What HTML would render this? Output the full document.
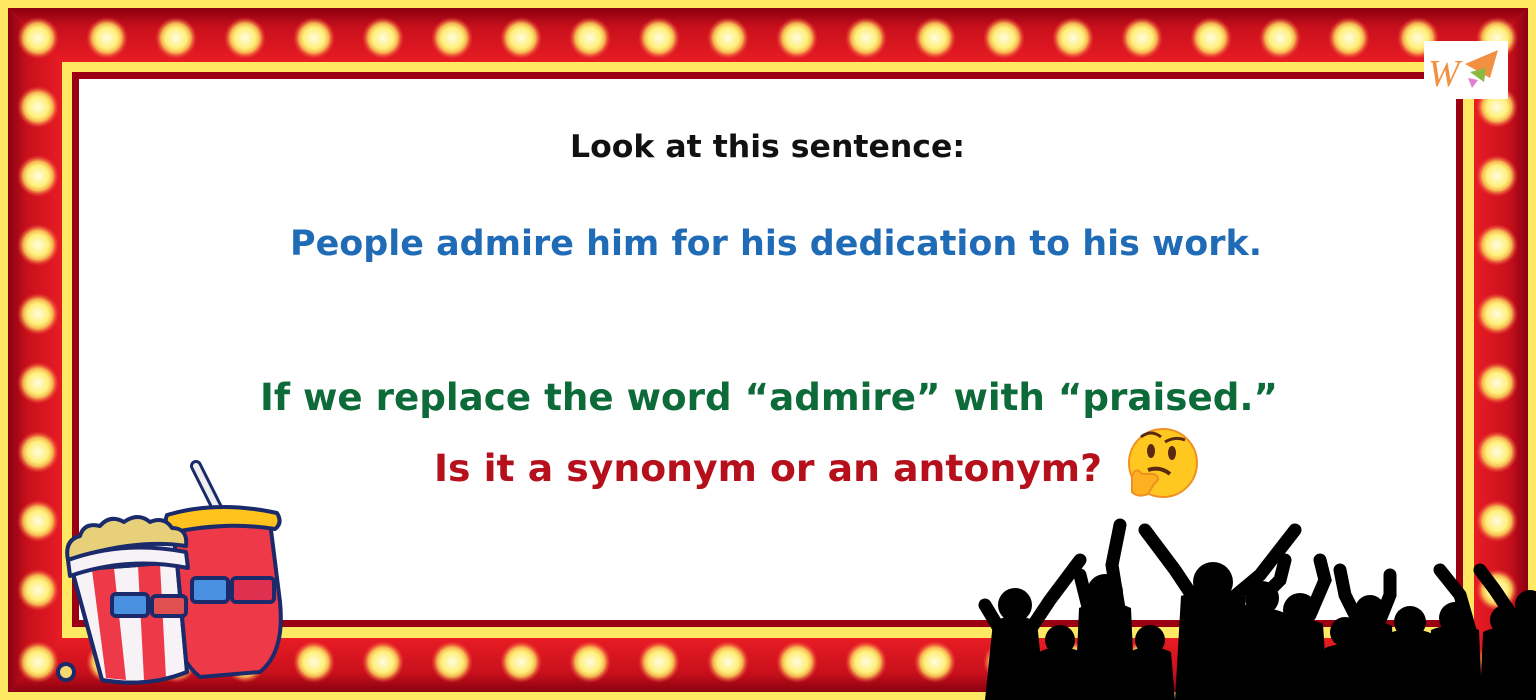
<!DOCTYPE html>
<html><head><meta charset="utf-8"><style>
html,body{margin:0;padding:0;width:1536px;height:700px;overflow:hidden;background:#fff}
</style></head><body>
<svg width="1536" height="700" viewBox="0 0 1536 700" xmlns="http://www.w3.org/2000/svg">
<defs>
<radialGradient id="bulb"><stop offset="0" stop-color="#fffbe0"/><stop offset="0.5" stop-color="#fff07a"/><stop offset="0.7" stop-color="#ffe060" stop-opacity="0.8"/><stop offset="1" stop-color="#ff5040" stop-opacity="0"/></radialGradient>
<linearGradient id="tg" x1="0" y1="0" x2="0" y2="1"><stop offset="0" stop-color="#8a0010"/><stop offset="0.35" stop-color="#c8101c"/><stop offset="1" stop-color="#e81c24"/></linearGradient>
<linearGradient id="bg" x1="0" y1="0" x2="0" y2="1"><stop offset="0" stop-color="#e81c24"/><stop offset="0.65" stop-color="#c8101c"/><stop offset="1" stop-color="#8a0010"/></linearGradient>
<linearGradient id="lg" x1="0" y1="0" x2="1" y2="0"><stop offset="0" stop-color="#8a0010"/><stop offset="0.35" stop-color="#c8101c"/><stop offset="1" stop-color="#e81c24"/></linearGradient>
<linearGradient id="rg" x1="0" y1="0" x2="1" y2="0"><stop offset="0" stop-color="#e81c24"/><stop offset="0.65" stop-color="#c8101c"/><stop offset="1" stop-color="#8a0010"/></linearGradient>
</defs>
<rect width="1536" height="700" fill="#ffe862"/>
<rect x="8" y="8" width="1520" height="684" fill="#e01a22"/>
<polygon points="8,8 1528,8 1474,62 62,62" fill="url(#tg)"/>
<polygon points="8,692 1528,692 1474,638 62,638" fill="url(#bg)"/>
<polygon points="8,8 62,62 62,638 8,692" fill="url(#lg)"/>
<polygon points="1528,8 1474,62 1474,638 1528,692" fill="url(#rg)"/>
<rect x="62" y="62" width="1412" height="576" fill="#ffe862"/>
<rect x="72" y="72" width="1391" height="555" fill="#9a0012"/>
<rect x="79" y="79" width="1377" height="541" fill="#fff"/>
<g fill="url(#bulb)">
<g id="row">
<circle cx="38" cy="38" r="21"/><circle cx="107" cy="38" r="21"/><circle cx="176" cy="38" r="21"/><circle cx="245" cy="38" r="21"/><circle cx="314" cy="38" r="21"/><circle cx="383" cy="38" r="21"/><circle cx="452" cy="38" r="21"/><circle cx="521" cy="38" r="21"/><circle cx="590" cy="38" r="21"/><circle cx="659" cy="38" r="21"/><circle cx="728" cy="38" r="21"/><circle cx="797" cy="38" r="21"/><circle cx="866" cy="38" r="21"/><circle cx="935" cy="38" r="21"/><circle cx="1004" cy="38" r="21"/><circle cx="1073" cy="38" r="21"/><circle cx="1142" cy="38" r="21"/><circle cx="1211" cy="38" r="21"/><circle cx="1280" cy="38" r="21"/><circle cx="1349" cy="38" r="21"/><circle cx="1418" cy="38" r="21"/><circle cx="1497" cy="38" r="21"/>
</g>
<use href="#row" y="624"/>
<g id="col">
<circle cx="38" cy="107" r="21"/><circle cx="38" cy="176" r="21"/><circle cx="38" cy="245" r="21"/><circle cx="38" cy="314" r="21"/><circle cx="38" cy="383" r="21"/><circle cx="38" cy="452" r="21"/><circle cx="38" cy="521" r="21"/><circle cx="38" cy="590" r="21"/>
</g>
<use href="#col" x="1459"/>
</g>
<!-- logo -->
<rect x="1424" y="41" width="84" height="58" fill="#fff"/>
<text x="1428" y="86" font-family="Liberation Serif,serif" font-style="italic" font-size="38" fill="#f09040">W</text>
<polygon points="1465,64 1498,50 1490,78" fill="#f09040"/>
<polygon points="1470,72 1486,68 1484,82" fill="#8ab840"/>
<polygon points="1468,78 1478,80 1472,88" fill="#e080d0"/>
<!-- text -->
<g font-family="'Comic Sans MS','DejaVu Sans',sans-serif" font-weight="bold">
<text x="570" y="157" font-size="31" fill="#111" textLength="395" lengthAdjust="spacingAndGlyphs">Look at this sentence:</text>
<text x="290" y="255" font-size="35" fill="#1f6bb5" textLength="972" lengthAdjust="spacingAndGlyphs">People admire him for his dedication to his work.</text>
<text x="260" y="410" font-size="37" fill="#0d6b3a" textLength="1018" lengthAdjust="spacingAndGlyphs">If we replace the word “admire” with “praised.”</text>
<text x="434" y="481" font-size="37" fill="#b5101c" textLength="668" lengthAdjust="spacingAndGlyphs">Is it a synonym or an antonym?</text>
</g>
<!-- emoji -->
<circle cx="1163" cy="463" r="34" fill="#ffc820" stroke="#f09020" stroke-width="2"/>
<ellipse cx="1151" cy="451" rx="4" ry="7" fill="#5a2a10"/><ellipse cx="1172" cy="453" rx="4" ry="7" fill="#5a2a10"/>
<path d="M1141 437 q10 -8 20 0 M1165 442 q10 -6 20 -2" stroke="#5a2a10" stroke-width="3" fill="none"/>
<path d="M1148 470 q12 -4 22 4" stroke="#5a2a10" stroke-width="4" fill="none"/>
<path d="M1132 476 q4 -10 10 -2 l12 0 q8 4 0 10 l-6 10 q-10 4 -16 -2z" fill="#ffb020" stroke="#f09020" stroke-width="2"/>
<!-- popcorn + cup -->
<g stroke="#1a2a6a" stroke-width="4" stroke-linejoin="round">
<path d="M196 466 l26 52" stroke="#1a2a6a" stroke-width="12" stroke-linecap="round"/>
<path d="M196 466 l26 52" stroke="#eee" stroke-width="6" stroke-linecap="round"/>
<path d="M175 530 l95 -8 l10 80 q5 50 -20 70 l-60 5 q-25 -20 -25 -60z" fill="#ee3a48"/>
<path d="M167 515 q50 -15 110 -2 q6 10 -2 16 q-50 -8 -104 4 q-8 -8 -4 -18z" fill="#ffc21e"/>
<path d="M68 560 q-4 -20 12 -24 q4 -14 20 -10 q10 -12 24 -4 q14 -10 26 0 q14 -6 22 6 q16 0 14 18 q-50 -8 -118 14z" fill="#e8d07a"/>
<path d="M72 570 l105 -8 l10 110 q-40 16 -85 8z" fill="#f6f2f6"/>
<path d="M92 570 l14 108 l20 2 l-12 -112z M138 566 l6 114 l22 -2 l-6 -114z" fill="#ee3a48" stroke="none"/>
<path d="M72 570 l105 -8 l10 110 q-40 16 -85 8z" fill="none"/>
<path d="M68 560 q55 -20 118 -8 l2 16 q-60 -12 -118 8z" fill="#f6f2f6"/>
<rect x="112" y="594" width="36" height="22" rx="4" fill="#4a90e0"/><rect x="152" y="596" width="34" height="20" rx="4" fill="#e05050"/>
<rect x="192" y="578" width="36" height="24" rx="4" fill="#4a90e0"/><rect x="232" y="578" width="42" height="24" rx="4" fill="#e03050"/>
<circle cx="66" cy="672" r="8" fill="#f5d870"/>
</g>
<!-- crowd silhouette -->
<g fill="#000">
<circle cx="1015" cy="605" r="17"/><circle cx="1060" cy="640" r="15"/><circle cx="1105" cy="592" r="18"/><circle cx="1150" cy="640" r="15"/><circle cx="1213" cy="582" r="20"/><circle cx="1262" cy="598" r="17"/><circle cx="1300" cy="610" r="17"/><circle cx="1345" cy="632" r="15"/><circle cx="1370" cy="610" r="15"/><circle cx="1410" cy="622" r="16"/><circle cx="1455" cy="618" r="16"/><circle cx="1505" cy="620" r="15"/><circle cx="1530" cy="605" r="15"/>
<path d="M985 700 l8 -78 q22 -12 44 0 l8 78z M1035 700 l4 -48 q21 -10 42 0 l4 48z M1075 700 l4 -92 q26 -12 52 0 l4 92z M1125 700 l4 -48 q21 -10 42 0 l4 48z M1175 700 l6 -104 q32 -12 64 0 l6 104z M1232 700 l5 -86 q25 -12 50 0 l5 86z M1272 700 l5 -76 q23 -10 46 0 l5 76z M1322 700 l3 -52 q20 -8 40 0 l3 52z M1345 700 l3 -74 q22 -10 44 0 l3 74z M1384 700 l3 -66 q23 -10 46 0 l3 66z M1428 700 l3 -70 q24 -10 48 0 l3 70z M1480 700 l3 -68 q22 -10 44 0 l3 68z M1510 700 l3 -84 q12 -8 23 0 v84z"/>
</g>
<g stroke="#000" stroke-width="13" stroke-linecap="round" fill="none">
<path d="M1000 630 l-15 -25"/>
<path d="M1030 630 l20 -30 l30 -40"/>
<path d="M1090 615 l-10 -40"/>
<path d="M1120 615 l-8 -50 l8 -40"/>
<path d="M1195 600 l-20 -30 l-30 -40"/>
<path d="M1230 600 l30 -25 l35 -45"/>
<path d="M1250 610 l30 -30 l5 -20"/>
<path d="M1310 615 l15 -35 l-5 -20"/>
<path d="M1360 625 l-15 -30 l-5 -25"/>
<path d="M1380 620 l10 -25 l0 -20"/>
<path d="M1470 630 l-10 -35 l-20 -25"/>
<path d="M1515 620 l-20 -30 l-15 -20"/>
</g>
</svg>
</body></html>
